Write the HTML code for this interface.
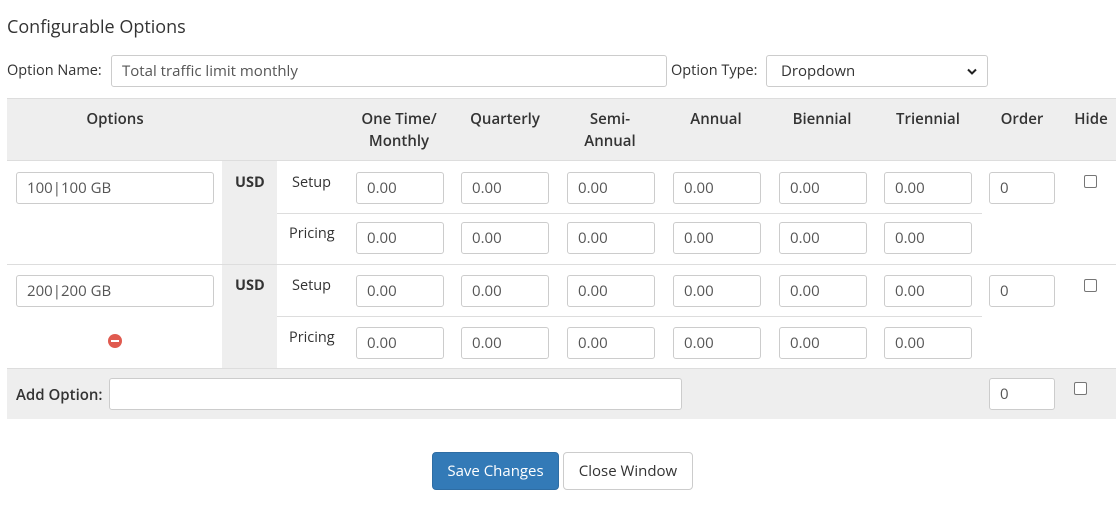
<!DOCTYPE html>
<html><head><style>
*{box-sizing:border-box}
body{margin:0;width:1116px;height:506px;background:#fff;font-family:"Open Sans","DejaVu Sans","Liberation Sans",sans-serif;color:#333;position:relative;overflow:hidden;font-size:14.5px}
.a{position:absolute}
.in{position:absolute;border:1px solid #ccc;border-radius:3px;background:#fff;height:32px;padding:0 10px;line-height:31px;font-size:15px;color:#555}
.p{width:88px}
.t{position:absolute;white-space:nowrap}
.h{position:absolute;font-weight:600;text-align:center;transform:translateX(-50%);line-height:22px;font-size:15px;color:#333}
.cb{position:absolute;width:13px;height:13px;border:1px solid #767676;border-radius:2px;background:#fff}
.line{position:absolute;height:1px;background:#ddd}
</style></head><body>
<div class="t" style="left:7px;top:15px;font-size:18px;color:#333">Configurable Options</div>
<div class="t" style="left:7px;top:61px">Option Name:</div>
<div class="in" style="left:111px;top:55px;width:556px">Total traffic limit monthly</div>
<div class="t" style="left:671px;top:61px">Option Type:</div>
<div class="in" style="left:766px;top:55px;width:222px;color:#333;padding-left:14px">Dropdown<svg style="position:absolute;right:10px;top:12px" width="10" height="7" viewBox="0 0 10 7"><path d="M1 1.5L5 5.5L9 1.5" fill="none" stroke="#222" stroke-width="2"/></svg></div>

<div class="a" style="left:7px;top:98px;width:1109px;height:63px;background:#eee;border-top:1px solid #ddd;border-bottom:1px solid #ddd"></div>
<div class="h" style="left:115px;top:108px">Options</div>
<div class="h" style="left:399px;top:108px">One Time/<br>Monthly</div>
<div class="h" style="left:505px;top:108px">Quarterly</div>
<div class="h" style="left:610px;top:108px">Semi-<br>Annual</div>
<div class="h" style="left:716px;top:108px">Annual</div>
<div class="h" style="left:822px;top:108px">Biennial</div>
<div class="h" style="left:928px;top:108px">Triennial</div>
<div class="h" style="left:1022px;top:108px">Order</div>
<div class="h" style="left:1091px;top:108px">Hide</div>

<div class="a" style="left:222px;top:161px;width:55px;height:207px;background:#eee"></div>
<div class="line" style="left:7px;top:264px;width:1109px"></div>
<div class="line" style="left:277px;top:213px;width:705px"></div>
<div class="line" style="left:277px;top:316px;width:705px"></div>

<div class="in" style="left:16px;top:172px;width:198px">100|100 GB</div>
<div class="in" style="left:16px;top:275px;width:198px">200|200 GB</div>
<div class="t" style="left:235px;top:173px;font-weight:bold">USD</div>
<div class="t" style="left:235px;top:276px;font-weight:bold">USD</div>
<div class="t" style="left:292px;top:173px">Setup</div>
<div class="t" style="left:289px;top:224px">Pricing</div>
<div class="t" style="left:292px;top:276px">Setup</div>
<div class="t" style="left:289px;top:328px">Pricing</div>
<div class="a" style="left:108px;top:334px;width:14px;height:14px;border-radius:50%;background:#e05a4f"><div style="position:absolute;left:3px;top:6px;width:8px;height:2px;background:#fff"></div></div>

<div class="in p" style="left:356px;top:172px">0.00</div><div class="in p" style="left:461px;top:172px">0.00</div><div class="in p" style="left:567px;top:172px">0.00</div><div class="in p" style="left:673px;top:172px">0.00</div><div class="in p" style="left:779px;top:172px">0.00</div><div class="in p" style="left:884px;top:172px">0.00</div>
<div class="in p" style="left:356px;top:222px">0.00</div><div class="in p" style="left:461px;top:222px">0.00</div><div class="in p" style="left:567px;top:222px">0.00</div><div class="in p" style="left:673px;top:222px">0.00</div><div class="in p" style="left:779px;top:222px">0.00</div><div class="in p" style="left:884px;top:222px">0.00</div>
<div class="in p" style="left:356px;top:275px">0.00</div><div class="in p" style="left:461px;top:275px">0.00</div><div class="in p" style="left:567px;top:275px">0.00</div><div class="in p" style="left:673px;top:275px">0.00</div><div class="in p" style="left:779px;top:275px">0.00</div><div class="in p" style="left:884px;top:275px">0.00</div>
<div class="in p" style="left:356px;top:327px">0.00</div><div class="in p" style="left:461px;top:327px">0.00</div><div class="in p" style="left:567px;top:327px">0.00</div><div class="in p" style="left:673px;top:327px">0.00</div><div class="in p" style="left:779px;top:327px">0.00</div><div class="in p" style="left:884px;top:327px">0.00</div>

<div class="in" style="left:989px;top:172px;width:66px">0</div>
<div class="in" style="left:989px;top:275px;width:66px">0</div>
<div class="cb" style="left:1084px;top:175px"></div>
<div class="cb" style="left:1084px;top:279px"></div>

<div class="a" style="left:7px;top:368px;width:1109px;height:51px;background:#eee;border-top:1px solid #ddd"></div>
<div class="t" style="left:16px;top:385px;font-weight:600;font-size:15px">Add Option:</div>
<div class="in" style="left:109px;top:378px;width:573px"></div>
<div class="in" style="left:989px;top:378px;width:66px">0</div>
<div class="cb" style="left:1074px;top:382px"></div>

<div class="a" style="left:432px;top:452px;width:127px;height:38px;background:#337ab7;border:1px solid #2e6da4;border-radius:4px;color:#fff;text-align:center;line-height:36px;font-size:15px">Save Changes</div>
<div class="a" style="left:563px;top:452px;width:130px;height:38px;background:#fff;border:1px solid #ccc;border-radius:4px;color:#333;text-align:center;line-height:36px;font-size:15px">Close Window</div>
</body></html>
